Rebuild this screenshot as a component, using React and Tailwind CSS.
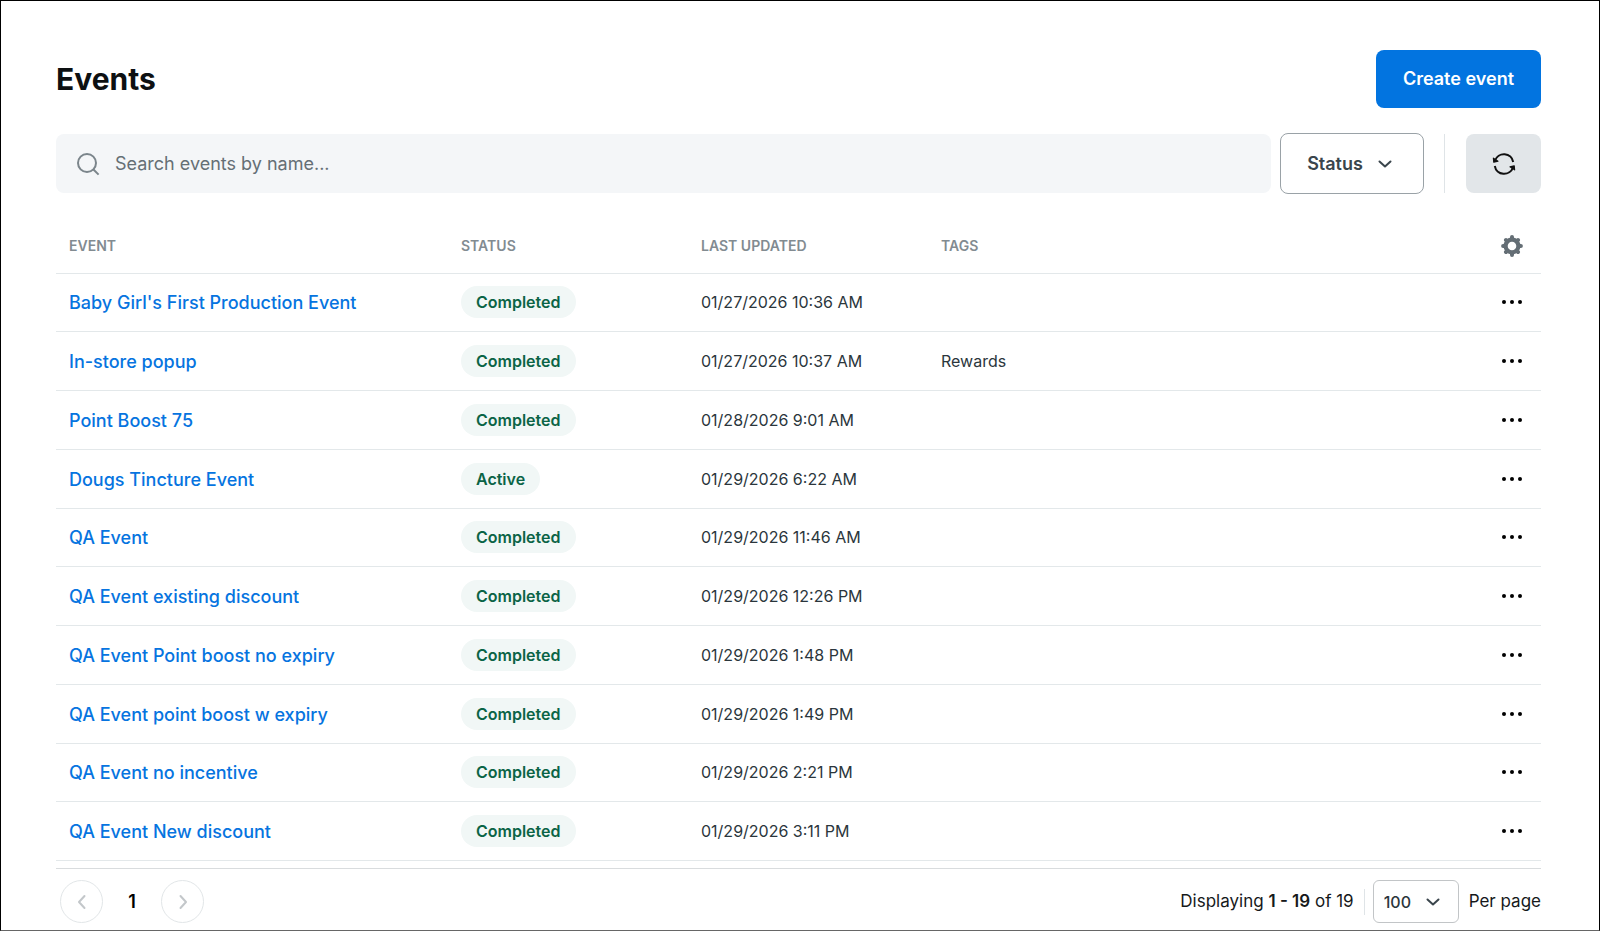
import React, { useState } from 'react';

const EVENTS = [
  { name: "Baby Girl's First Production Event", status: 'Completed', updated: '01/27/2026 10:36 AM', tags: '' },
  { name: 'In-store popup', status: 'Completed', updated: '01/27/2026 10:37 AM', tags: 'Rewards' },
  { name: 'Point Boost 75', status: 'Completed', updated: '01/28/2026 9:01 AM', tags: '' },
  { name: 'Dougs Tincture Event', status: 'Active', updated: '01/29/2026 6:22 AM', tags: '' },
  { name: 'QA Event', status: 'Completed', updated: '01/29/2026 11:46 AM', tags: '' },
  { name: 'QA Event existing discount', status: 'Completed', updated: '01/29/2026 12:26 PM', tags: '' },
  { name: 'QA Event Point boost no expiry', status: 'Completed', updated: '01/29/2026 1:48 PM', tags: '' },
  { name: 'QA Event point boost w expiry', status: 'Completed', updated: '01/29/2026 1:49 PM', tags: '' },
  { name: 'QA Event no incentive', status: 'Completed', updated: '01/29/2026 2:21 PM', tags: '' },
  { name: 'QA Event New discount', status: 'Completed', updated: '01/29/2026 3:11 PM', tags: '' },
];

const SearchIcon = () => (
  <svg className="size-6 shrink-0" viewBox="0 0 24 24" fill="none" stroke="#7b858b" strokeWidth="2" aria-hidden="true">
    <circle cx="11" cy="11" r="9" />
    <path d="M17.2 17.2 22.6 22.6" />
  </svg>
);

const ChevronIcon = ({ className, d }) => (
  <svg className={className} viewBox="0 0 16 16" fill="none" stroke="currentColor" strokeWidth="2" strokeLinecap="round" strokeLinejoin="round" aria-hidden="true">
    <path d={d} />
  </svg>
);

const RefreshIcon = () => (
  <svg className="size-6" viewBox="0 0 24 24" fill="none" stroke="#111" strokeWidth="2" aria-hidden="true">
    <path d="M3 8.6A9.4 9.4 0 0 1 21.2 10" />
    <path d="M21 15.4A9.4 9.4 0 0 1 2.8 14" />
    <path d="M1.4 6.2 1.8 10.2 6 9.2Z" fill="#111" strokeWidth="1.2" strokeLinejoin="round" />
    <path d="M22.6 17.8 22.2 13.8 18 14.8Z" fill="#111" strokeWidth="1.2" strokeLinejoin="round" />
  </svg>
);

// Eight rounded teeth around a ring
const GearIcon = () => (
  <svg className="size-[22px]" viewBox="-11 -11 22 22" fill="none" stroke="#646e75" aria-hidden="true">
    <circle r="6.4" strokeWidth="4.2" />
    <path
      d="M0-7.5V-8.9M0 7.5V8.9M-7.5 0H-8.9M7.5 0H8.9M5.2-5.2 6-6M-5.2-5.2-6-6M5.2 5.2 6 6M-5.2 5.2-6 6"
      strokeWidth="4"
      strokeLinecap="round"
    />
  </svg>
);

const MoreIcon = () => (
  <svg className="h-2 w-6" viewBox="0 0 24 8" fill="#000" aria-hidden="true">
    <circle cx="4" cy="4" r="2" />
    <circle cx="12" cy="4" r="2" />
    <circle cx="20" cy="4" r="2" />
  </svg>
);

const App = () => {
  const [query, setQuery] = useState('');
  const [perPage, setPerPage] = useState('100');

  const rows = EVENTS.filter((event) => event.name.toLowerCase().includes(query.toLowerCase()));

  return (
    <div className="flex min-h-screen flex-col border border-black border-b-[#666] bg-white pt-[49px] pr-[58px] pb-[7px] pl-[55px] font-['Inter',sans-serif] text-[#2b363c]">
      <header className="flex items-center justify-between">
        <h1 className="text-[30px] font-bold text-[#0d1012]">Events</h1>
        <button type="button" className="h-[58px] rounded-lg bg-[#0274e0] px-[27px] text-lg font-semibold text-white">
          Create event
        </button>
      </header>

      <div className="mt-[25px] flex items-center">
        <label className="flex h-[59px] flex-1 items-center gap-[15px] rounded-lg bg-[#f4f6f8] px-5">
          <SearchIcon />
          <input
            type="text"
            aria-label="Search events by name"
            placeholder="Search events by name..."
            value={query}
            onChange={(e) => setQuery(e.target.value)}
            className="w-full bg-transparent text-lg placeholder-[#656f75] outline-none"
          />
        </label>
        <button type="button" className="ml-[9px] flex h-[61px] w-36 items-center justify-center gap-[14px] rounded-lg border border-[#9aa2a7] pr-1 text-lg font-semibold text-[#3a454c]">
          Status
          <ChevronIcon className="size-4" d="M2.5 5.5 8 10.5 13.5 5.5" />
        </button>
        <div className="ml-5 h-[59px] w-px bg-[#dfe4e7]" />
        <button type="button" aria-label="Refresh" className="ml-[21px] flex h-[59px] w-[75px] items-center justify-center rounded-lg bg-[#e2e6e9]">
          <RefreshIcon />
        </button>
      </div>

      <table className="mt-[26px] w-full flex-1 table-fixed border-collapse text-left">
        <thead>
          <tr className="h-[53px] border-b border-[#e3e8ea] text-sm text-[#828b91]">
            <th className="w-[392px] px-[13px] font-semibold">EVENT</th>
            <th className="w-60 px-[13px] font-semibold">STATUS</th>
            <th className="w-60 px-[13px] font-semibold">LAST UPDATED</th>
            <th className="px-[13px] font-semibold">TAGS</th>
            <th className="w-[58px]">
              <button type="button" aria-label="Table settings" className="mx-auto block">
                <GearIcon />
              </button>
            </th>
          </tr>
        </thead>
        <tbody>
          {rows.map((event) => (
            <tr key={event.name} className="border-b border-[#e3e8ea]">
              <td className="px-[13px] pt-0.5 text-lg font-medium whitespace-nowrap">
                <a href="#" className="text-[#0674e0]">{event.name}</a>
              </td>
              <td className="px-[13px]">
                <span className="inline-block rounded-full bg-[#f1f7f6] px-[15px] py-1 align-middle text-base font-semibold text-[#0b6446]">
                  {event.status}
                </span>
              </td>
              <td className="px-[13px] text-base whitespace-nowrap">{event.updated}</td>
              <td className="px-[13px] text-base">{event.tags}</td>
              <td>
                <button type="button" aria-label={`Actions for ${event.name}`} className="mx-auto block">
                  <MoreIcon />
                </button>
              </td>
            </tr>
          ))}
        </tbody>
      </table>

      <footer className="mt-[7px] flex items-center justify-between border-t border-[#d9dcde] pt-[11px] text-[#16191b]">
        <nav aria-label="Pagination" className="flex items-center pl-1">
          <button type="button" aria-label="Previous page" className="flex size-[43px] items-center justify-center rounded-full border border-[#e2e6e8] text-[#c3c7ca]">
            <ChevronIcon className="size-4" d="M10.5 2 5 8 10.5 14" />
          </button>
          <span className="w-[58px] text-center text-lg font-semibold text-black">1</span>
          <button type="button" aria-label="Next page" className="flex size-[43px] items-center justify-center rounded-full border border-[#e2e6e8] text-[#c3c7ca]">
            <ChevronIcon className="size-4" d="M5.5 2 11 8 5.5 14" />
          </button>
        </nav>
        <div className="flex items-center text-[17px]">
          <span>
            Displaying <b className="font-semibold">1 - 19</b> of 19
          </span>
          <div className="ml-[10px] h-[26px] w-px bg-[#dfe4e7]" />
          <div className="relative ml-2">
            <select
              id="per-page"
              value={perPage}
              onChange={(e) => setPerPage(e.target.value)}
              className="block h-[43px] w-[86px] appearance-none rounded-md border border-[#c2c5c7] bg-white pl-[10px] text-base font-medium text-[#2b363c]"
            >
              <option>25</option>
              <option>50</option>
              <option>100</option>
            </select>
            <ChevronIcon className="pointer-events-none absolute top-[14px] right-[18px] size-4 text-[#3a454c]" d="M2.5 5.5 8 10.5 13.5 5.5" />
          </div>
          <label htmlFor="per-page" className="ml-[10px]">Per page</label>
        </div>
      </footer>
    </div>
  );
};

export default App;
